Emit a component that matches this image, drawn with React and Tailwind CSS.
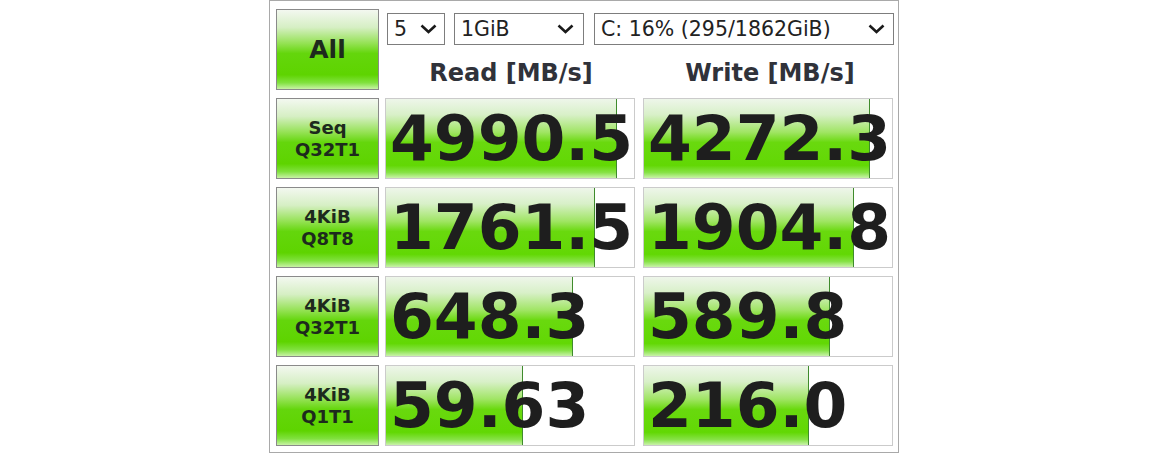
import React from "react";

const font = { fontFamily: '"DejaVu Sans", Verdana, sans-serif' };

function Chevron() {
  return (
    <svg width="17" height="10" viewBox="0 0 17 10" className="shrink-0">
      <polyline points="1.5,1.5 8.5,8 15.5,1.5" fill="none" stroke="#1a1a1a" strokeWidth="2.6" strokeLinejoin="miter" />
    </svg>
  );
}

function Select({ w, text, pr }) {
  return (
    <div className={`${w} ${pr} h-[32px] flex items-center justify-between border border-[#7d7d7d] bg-white pl-[6px] text-[20.5px] text-[#222] leading-none`}>
      <span>{text}</span>
      <Chevron />
    </div>
  );
}

function Btn({ children, big }) {
  return (
    <div className="w-[103px] h-[81px] shrink-0 border border-[#8a8a8a] bg-[linear-gradient(to_bottom,#f3f8f0_0%,#d6efc4_22%,#95e255_42%,#64d60c_55%,#5ed400_82%,#80e13e_92%,#c8f2a6_100%)] flex flex-col items-center justify-center font-bold text-[#1d2a1d]">
      {big ? (
        <span className="text-[25px] leading-none">{children}</span>
      ) : (
        children.map((t, i) => (
          <span key={i} className="text-[18px] leading-[22px]">{t}</span>
        ))
      )}
    </div>
  );
}

function Cell({ value, pct, extra }) {
  return (
    <div className={`relative w-[250px] h-[81px] shrink-0 border border-[#cbcbcb] bg-white overflow-hidden ${extra}`}>
      <div
        className="absolute left-0 top-0 bottom-0 border-r border-[#3f8b2c] bg-[linear-gradient(to_bottom,#eef6ea_0%,#d8f0c8_20%,#a0e564_42%,#69d90e_55%,#62d804_84%,#86e246_93%,#c9f2aa_100%)]"
        style={{ width: `${pct}%` }}
      />
      <div className="relative h-full flex items-center pl-[4px] text-[63px] font-bold text-[#1e1e1e] leading-none">
        {value}
      </div>
    </div>
  );
}

const rows = [
  { label: ["Seq", "Q32T1"], r: "4990.5", rp: 93, w: "4272.3", wp: 91.2 },
  { label: ["4KiB", "Q8T8"], r: "1761.5", rp: 84.4, w: "1904.8", wp: 84.8 },
  { label: ["4KiB", "Q32T1"], r: "648.3", rp: 75.6, w: "589.8", wp: 74.8 },
  { label: ["4KiB", "Q1T1"], r: "59.63", rp: 55.2, w: "216.0", wp: 66.4 },
];

export default function App() {
  return (
    <div className="w-[1169px] h-[454px] bg-white" style={font}>
      <div className="ml-[269px] w-[630px] h-[453px] border border-[#a9a9a9] pl-[6px] pt-[8px] flex flex-col gap-[8px]">
        <div className="flex h-[81px]">
          <Btn big>All</Btn>
          <div className="ml-[7px] flex flex-col">
            <div className="mt-[4px] ml-[1px] flex">
              <Select w="w-[58px]" pr="pr-[7px]" text="5" />
              <div className="ml-[9px]"><Select w="w-[130px]" pr="pr-[9px]" text="1GiB" /></div>
              <div className="ml-[10px]"><Select w="w-[300px]" pr="pr-[8px]" text="C: 16% (295/1862GiB)" /></div>
            </div>
            <div className="flex flex-1 items-center text-[24px] font-bold text-[#30323a] leading-none">
              <div className="w-[250px] text-center pt-[11px]">Read [MB/s]</div>
              <div className="w-[250px] ml-[9px] text-center pt-[11px]">Write [MB/s]</div>
            </div>
          </div>
        </div>
        {rows.map((row, i) => (
          <div key={i} className="flex h-[81px]">
            <Btn>{row.label}</Btn>
            <Cell value={row.r} pct={row.rp} extra="ml-[6px]" />
            <Cell value={row.w} pct={row.wp} extra="ml-[8px]" />
          </div>
        ))}
      </div>
    </div>
  );
}
